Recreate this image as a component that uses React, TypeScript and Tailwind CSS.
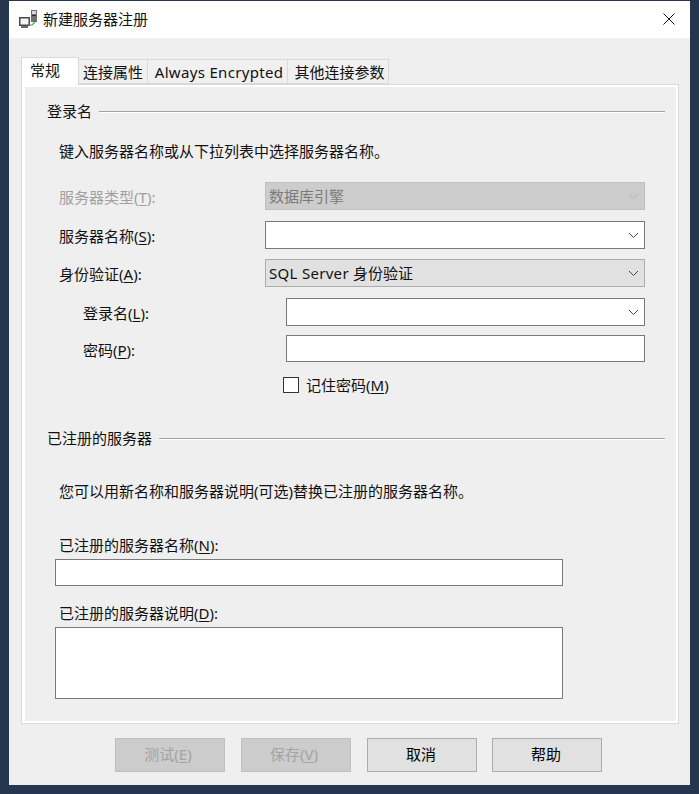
import React from 'react'

function Chevron({ color = '#444' }: { color?: string }) {
  return (
    <svg width="11" height="7" viewBox="0 0 11 7" className="shrink-0">
      <polyline points="1,1 5.5,5.5 10,1" fill="none" stroke={color} strokeWidth="1" />
    </svg>
  )
}

function Heading({ title }: { title: string }) {
  return (
    <div className="flex h-5 items-center pl-[22px] pr-[11px]">
      <span>{title}</span>
      <div className="ml-[7px] mt-[2px] flex-1 border-t border-b border-t-[#a0a0a0] border-b-white" />
    </div>
  )
}

function Key({ k }: { k: string }) {
  return <>(<span className="underline underline-offset-2">{k}</span>):</>
}

function Combo({ className, text, chevron, textColor }: { className: string; text?: React.ReactNode; chevron?: string; textColor?: string }) {
  return (
    <div className={`flex h-7 items-center justify-between border pl-[3px] pr-[5px] ${className}`}>
      <span className={textColor}>{text}</span>
      <Chevron color={chevron} />
    </div>
  )
}

function Btn({ children, disabled }: { children: React.ReactNode; disabled?: boolean }) {
  return (
    <div className={`flex h-[34px] w-[110px] items-center justify-center border pb-[3px] ${disabled ? 'border-[#bfbfbf] bg-[#cccccc] pr-1 text-[#a3a3a3]' : 'border-[#adadad] bg-[#e1e1e1] pr-0.5 text-black'}`}>
      {children}
    </div>
  )
}

export default function App() {
  return (
    <div className="h-[794px] w-[699px] overflow-hidden bg-[#27364f] pl-[9px] pt-px font-['Noto_Sans','Noto_Sans_CJK_SC',sans-serif] text-[15px] leading-5 text-[#111111]">
      <div className="h-[784px] w-[681px] bg-[#efefef]">
        <div className="flex h-[37px] items-center bg-white pb-[2px] pl-[10px] pr-[15px]">
          <svg width="19" height="19" viewBox="0 0 19 19" className="shrink-0">
            <rect x="12" y="1" width="6" height="12" fill="#6e6e6e" />
            <rect x="13" y="2" width="4" height="3" fill="#d8d8d8" />
            <rect x="13" y="6" width="4" height="1" fill="#2e2e2e" />
            <rect x="0.75" y="8.75" width="9.5" height="7.5" fill="#f4f4f4" stroke="#4a4a4a" strokeWidth="1.5" />
            <rect x="2" y="17" width="7" height="2" fill="#6a6a6a" />
            <polyline points="10,16 13,16 16,13" fill="none" stroke="#3fae3f" strokeWidth="1.2" />
          </svg>
          <span className="ml-[5px] flex-1">新建服务器注册</span>
          <svg width="12" height="12" viewBox="0 0 12 12">
            <path d="M0.5 0.5L11.5 11.5M11.5 0.5L0.5 11.5" stroke="#111" strokeWidth="1" />
          </svg>
        </div>

        <div className="ml-3 mr-[11px] mt-[19px]">
          <div className="flex h-[27px] items-end">
            <div className="relative z-10 -mb-px flex h-[28px] w-[58px] items-center border border-b-0 border-[#d9d9d9] bg-white pb-[3px] pl-2">常规</div>
            <div className="flex h-[25px] w-[69px] items-center justify-center border-y border-r border-[#d9d9d9] bg-[#f0f0f0] pt-px">连接属性</div>
            <div className="flex h-[25px] w-[140px] items-center justify-center border-y border-r border-[#d9d9d9] bg-[#f0f0f0] pl-[3px] pt-px tracking-[0.32px]">Always Encrypted</div>
            <div className="flex h-[25px] w-[101px] items-center justify-center border-y border-r border-[#d9d9d9] bg-[#f0f0f0] pl-[3px] pt-px">其他连接参数</div>
          </div>

          <div className="h-[640px] border border-[#d9d9d9]">
            <div className="h-full border-2 border-l-[3px] border-white pt-[14px]">
              <Heading title="登录名" />
              <div className="ml-[34px] mt-5 h-5">键入服务器名称或从下拉列表中选择服务器名称。</div>

              <div className="ml-[34px] mt-[21px] flex items-center">
                <span className="w-[206px] pt-0.5 text-[#a0a0a0]">服务器类型<Key k="T" /></span>
                <Combo className="w-[380px] border-[#bfbfbf] bg-[#cccccc]" text="数据库引擎" textColor="text-[#7a7a7a]" chevron="#b0b0b0" />
              </div>
              <div className="ml-[34px] mt-[11px] flex items-center">
                <span className="w-[206px] pt-0.5">服务器名称<Key k="S" /></span>
                <Combo className="w-[380px] border-[#7a7a7a] bg-white" />
              </div>
              <div className="ml-[34px] mt-[10px] flex items-center">
                <span className="w-[206px] pt-0.5">身份验证<Key k="A" /></span>
                <Combo className="w-[380px] border-[#adadad] bg-[#e1e1e1]" text={<><span className="tracking-[0.3px]">SQL Server </span>身份验证</>} />
              </div>
              <div className="ml-[58px] mt-[11px] flex items-center">
                <span className="w-[203px] pt-0.5">登录名<Key k="L" /></span>
                <Combo className="w-[359px] border-[#7a7a7a] bg-white" />
              </div>
              <div className="ml-[58px] mt-[9px] flex items-center">
                <span className="w-[203px] pt-0.5">密码<Key k="P" /></span>
                <div className="h-[27px] w-[359px] border border-[#7a7a7a] bg-white" />
              </div>
              <div className="ml-[258px] mt-[13px] flex h-5 items-center">
                <div className="h-4 w-4 border border-[#333] bg-white" />
                <span className="ml-[7px]">记住密码(<span className="underline underline-offset-2">M</span>)</span>
              </div>

              <div className="mt-[33px]">
                <Heading title="已注册的服务器" />
              </div>
              <div className="ml-[34px] mt-[33px] h-5">您可以用新名称和服务器说明(可选)替换已注册的服务器名称。</div>
              <div className="ml-[34px] mt-[34px] h-5">已注册的服务器名称<Key k="N" /></div>
              <div className="ml-[30px] mt-1 h-[27px] w-[508px] border border-[#7a7a7a] bg-white" />
              <div className="ml-[34px] mt-[17px] h-5">已注册的服务器说明<Key k="D" /></div>
              <div className="ml-[30px] mt-1 h-[72px] w-[508px] border border-[#7a7a7a] bg-white" />
            </div>
          </div>
        </div>

        <div className="ml-[106px] mt-[14px] flex items-start">
          <Btn disabled>测试(<span className="underline underline-offset-2">E</span>)</Btn>
          <div className="ml-4"><Btn disabled>保存(<span className="underline underline-offset-2">V</span>)</Btn></div>
          <div className="ml-4"><Btn>取消</Btn></div>
          <div className="ml-[15px]"><Btn>帮助</Btn></div>
        </div>
      </div>
    </div>
  )
}
